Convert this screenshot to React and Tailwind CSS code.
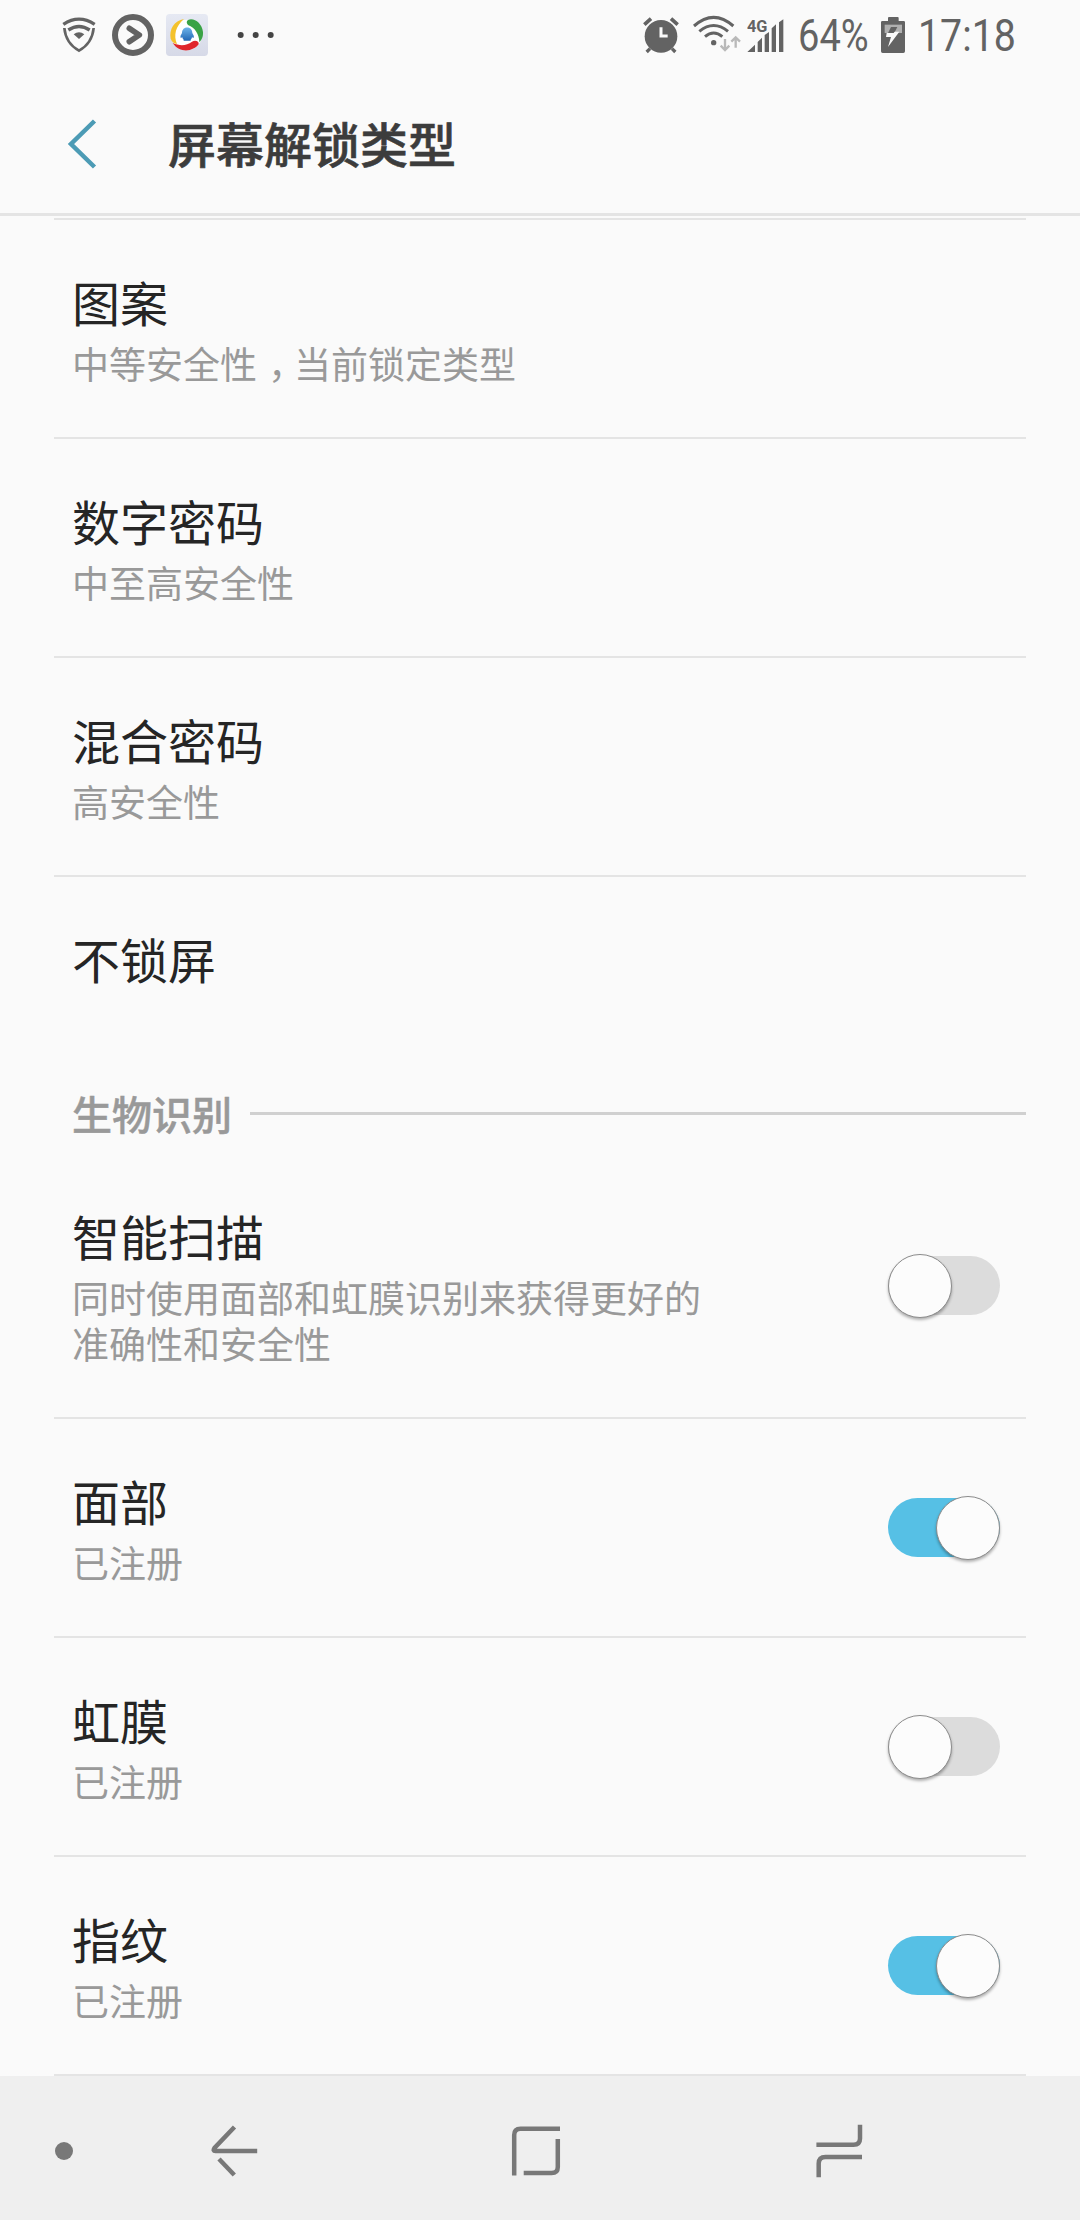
import { useState } from 'react';

const lockTypes = [
  { title: '图案', text: ['中等安全性', '当前锁定类型'] },
  { title: '数字密码', text: ['中至高安全性'] },
  { title: '混合密码', text: ['高安全性'] },
];

const biometrics = [
  { id: 'smart', title: '智能扫描', text: '同时使用面部和虹膜识别来获得更好的\n准确性和安全性' },
  { id: 'face', title: '面部', text: '已注册' },
  { id: 'iris', title: '虹膜', text: '已注册' },
  { id: 'finger', title: '指纹', text: '已注册' },
];

const StatusBar = () => (
  <div className="flex h-[68px] shrink-0 items-start pt-[10px] pl-[60px] text-[#636363]">
    <svg className="h-[50px] w-10" viewBox="60 30 120 150" fill="none" stroke="currentColor">
      <path d="M73 84C76 116 92 138 117 152C142 138 158 116 161 84" strokeWidth="8" />
      <path d="M70 73Q117 42 164 73" strokeWidth="10" />
      <path d="M85 90Q117 69 149 90" strokeWidth="10" />
      <path d="M101 103Q117 91 133 103L117 117Z" fill="currentColor" stroke="none" />
    </svg>
    <svg className="ml-3 h-[50px] w-[42px]" viewBox="216 30 126 150" fill="none" stroke="currentColor">
      <circle cx="279" cy="105" r="54" strokeWidth="18" />
      <path d="M268 85L298 105L268 125" strokeWidth="17" strokeLinecap="round" strokeLinejoin="round" />
    </svg>
    <svg className="ml-3 h-[50px] w-[42px]" viewBox="378 30 126 150">
      <defs>
        <linearGradient id="tile" x1="0" y1="0" x2="0" y2="1">
          <stop offset="0" stopColor="#e6e9f3" />
          <stop offset="1" stopColor="#d6d9e7" />
        </linearGradient>
        <linearGradient id="body" x1="0" y1="0" x2="0" y2="1">
          <stop offset="0" stopColor="#6db4ea" />
          <stop offset="1" stopColor="#2268b5" />
        </linearGradient>
      </defs>
      <rect x="378" y="42" width="126" height="126" rx="11" fill="url(#tile)" />
      <circle cx="440" cy="105" r="46" fill="#fff" />
      <path d="M432 57C402 62 387 88 392 116C396 126 402 130 411 132C400 106 407 78 432 57Z" fill="#f4c22c" />
      <path d="M444 60C462 52 486 70 489 96C490 111 484 122 478 126C477 102 466 84 444 75C439 69 439 63 444 60Z" fill="#3aa346" />
      <path d="M398 129C421 139 440 137 456 125C466 119 478 124 476 133C462 153 421 163 398 129Z" fill="#e0262c" />
      <path d="M426 99C426 77 457 77 457 99Q463 107 461 114L456 112Q455 117 452 119V122H431V119Q428 117 427 112L422 114Q420 107 426 99Z" fill="url(#body)" />
    </svg>
    <svg className="ml-7 h-[50px] w-10" viewBox="588 30 120 150" fill="#444">
      <circle cx="602" cy="105" r="9" />
      <circle cx="647" cy="105" r="9" />
      <circle cx="692" cy="105" r="9" />
    </svg>

    <svg className="ml-[364px] h-[50px] w-10" viewBox="60 30 120 150" fill="none" stroke="currentColor">
      <circle cx="123" cy="109" r="49" fill="currentColor" stroke="none" />
      <path d="M73 74L93 56M153 56L173 74" strokeWidth="11" />
      <path d="M90 146L80 156M156 146L166 156" strokeWidth="10" />
      <path d="M123 82V108H143" stroke="#fafafa" strokeWidth="9" />
    </svg>
    <svg className="ml-3 h-[50px] w-[50px]" viewBox="216 30 150 150" fill="none" stroke="currentColor" strokeWidth="9">
      <path d="M222 78Q281 26 340 78" />
      <path d="M238 94Q281 59 324 94" />
      <path d="M255 110Q281 88 307 110" />
      <circle cx="281" cy="128" r="8" fill="currentColor" stroke="none" />
      <path d="M315 117V148M302 137L315 150L328 137" stroke="#b9b9b9" strokeWidth="7" />
      <path d="M347 143V113M334 125L347 112L360 125" stroke="#b9b9b9" strokeWidth="7" />
    </svg>
    <div className="relative ml-[5px] h-[50px] w-[37px]">
      <svg className="h-[50px] w-[37px]" viewBox="381 30 111 150" fill="currentColor">
        <path d="M382 156L405 134V156ZM413 156V126L426 113V156ZM434 156V105L447 96V156ZM455 156V85L468 73V156ZM477 156V67L490 58V156Z" />
      </svg>
      <span className="absolute top-[7px] left-0 origin-left scale-x-[0.96] font-[Roboto] text-[17px] leading-[18px] font-bold">4G</span>
    </div>
    <span className="ml-[14px] w-[82px] origin-left scale-x-[0.865] font-[Roboto] text-[44px] leading-[53px]">64%</span>
    <svg className="h-[50px] w-[26px]" viewBox="780 30 78 150">
      <path d="M807 51H833Q836 51 836 54V63H851Q855 63 855 67V154Q855 159 850 159H788Q783 159 783 154V67Q783 63 787 63H804V54Q804 51 807 51Z" fill="currentColor" />
      <path d="M794 74H846V99H794Z" fill="#b0b0b0" />
      <path d="M813 81H832L823 99H804Z" fill="currentColor" />
      <path d="M800 99H821L824 95H838L804 141L813 111H798Z" fill="#fafafa" />
    </svg>
    <span className="ml-3 origin-left scale-x-[0.893] font-[Roboto] text-[44px] leading-[53px]">17:18</span>
  </div>
);

const Switch = ({ on, onChange }) => (
  <button
    type="button"
    role="switch"
    aria-checked={on}
    onClick={onChange}
    className={`mr-[26px] flex h-[59px] w-28 shrink-0 items-center rounded-full ${on ? 'justify-end bg-[#56c0e5]' : 'justify-start bg-[#dcdcdc]'}`}
  >
    <span className="h-16 w-16 shrink-0 rounded-full border border-[#8c8c8c] bg-[#fcfcfc] shadow-[0_2px_3px_rgba(0,0,0,0.3)]" />
  </button>
);

const Title = ({ children }) => <h2 className="text-[48px] leading-[72px] text-[#252525]">{children}</h2>;

const App = () => {
  const [enabled, setEnabled] = useState({ smart: false, face: true, iris: false, finger: true });

  const toggle = id => setEnabled({ ...enabled, [id]: !enabled[id] });

  return (
    <div className="flex h-[2220px] w-[1080px] flex-col overflow-hidden bg-[#fafafa] font-['Noto_Sans_CJK_SC',sans-serif]">
      <StatusBar />

      <header className="flex h-[148px] shrink-0 items-center border-b-[3px] border-[#e4e4e4] pl-[66px]">
        <svg className="mt-[7px] h-[50px] w-8 text-[#4c9bb5]" viewBox="0 0 32 50" fill="none" stroke="currentColor" strokeWidth="4.5">
          <path d="M28.5 2L5 25L28.5 48" />
        </svg>
        <h1 className="mt-[3px] ml-[70px] text-[48px] leading-[72px] font-medium text-[#3c3c3c] [-webkit-text-stroke:0.6px]">屏幕解锁类型</h1>
      </header>

      <main className="mx-[54px] mt-[2px] flex-1 border-t-2 border-[#e4e4e4]">
        {lockTypes.map(item => (
          <div key={item.title} className="h-[219px] border-b-2 border-[#e4e4e4] pt-[45px] pl-[18px]">
            <Title>{item.title}</Title>
            <p className="mt-[3px] flex text-[37px] leading-[46px] text-[#999]">
              {item.text[0]}
              {item.text[1] && <span className="w-[37px] pl-[11px] [font-feature-settings:'halt']">，</span>}
              {item.text[1]}
            </p>
          </div>
        ))}
        <div className="h-[195px] pt-[45px] pl-[18px]">
          <Title>不锁屏</Title>
        </div>

        <div className="flex h-[82px] items-center pl-[18px]">
          <h3 className="w-[178px] text-[40px] leading-[60px] font-medium text-[#999] [-webkit-text-stroke:0.5px]">生物识别</h3>
          <div className="h-[3px] flex-1 bg-[#d0d0d0]" />
        </div>

        {biometrics.map(item => (
          <div key={item.id} className="flex items-center justify-between border-b-2 border-[#e4e4e4] pl-[18px]">
            <div className="pt-[45px] pb-[51px]">
              <Title>{item.title}</Title>
              <p className="mt-[3px] text-[37px] leading-[46px] whitespace-pre-line text-[#999]">{item.text}</p>
            </div>
            <Switch on={enabled[item.id]} onChange={() => toggle(item.id)} />
          </div>
        ))}
      </main>

      <nav className="flex h-36 shrink-0 items-center bg-[#efefef] pt-[6px] pl-[55px] text-[#787878]">
        <span className="h-[18px] w-[18px] rounded-full bg-[#787878]" />
        <svg className="ml-[137px] h-[60px] w-[50px]" viewBox="210 2121 50 60" fill="none" stroke="currentColor" strokeWidth="4.5">
          <path d="M234.5 2127L214.5 2148Q212.5 2151 215.5 2151H257.2" />
          <path d="M219 2159L234.3 2175" />
        </svg>
        <svg className="ml-[250px] h-[60px] w-[52px]" viewBox="510 2121 52 60" fill="none" stroke="currentColor" strokeWidth="4.5">
          <path d="M514.2 2175.5V2135Q514.2 2128.7 520.5 2128.7H560" />
          <path d="M557.8 2139V2167Q557.8 2173.1 551.5 2173.1H523.7" />
        </svg>
        <svg className="ml-[252px] h-[60px] w-[50px]" viewBox="814 2121 50 60" fill="none" stroke="currentColor" strokeWidth="4.5">
          <path d="M816.4 2144.8H853.5Q860 2144.8 860 2138.5V2124.7" />
          <path d="M862 2156.9H825.5Q818.7 2156.9 818.7 2163.5V2177.3" />
        </svg>
      </nav>
    </div>
  );
};

export default App;
